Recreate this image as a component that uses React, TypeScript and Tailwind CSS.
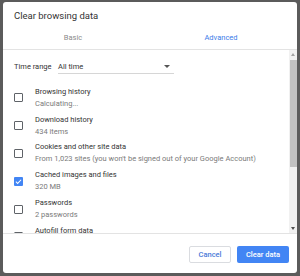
import React from "react";

const items = [
  { title: "Browsing history", sub: "Calculating...", checked: false },
  { title: "Download history", sub: "434 items", checked: false },
  { title: "Cookies and other site data", sub: "From 1,023 sites (you won't be signed out of your Google Account)", checked: false },
  { title: "Cached images and files", sub: "320 MB", checked: true },
  { title: "Passwords", sub: "2 passwords", checked: false },
  { title: "Autofill form data", sub: "", checked: false },
];

const Checkbox = ({ checked }: { checked: boolean }) =>
  checked ? (
    <div className="w-[9px] h-[9px] rounded-[1px] bg-[#4285f4] flex items-center justify-center shrink-0">
      <svg width="7" height="7" viewBox="0 0 24 24">
        <path d="M3 12.5l6 6L21 6" fill="none" stroke="white" strokeWidth="3.5" />
      </svg>
    </div>
  ) : (
    <div className="w-[9px] h-[9px] rounded-[1px] border-[1.5px] border-[#5f6368] shrink-0" />
  );

export default function App() {
  return (
    <div className="w-[300px] h-[276px] bg-[#5b5b5b] pt-[2px] pl-[3px] overflow-hidden" style={{ fontFamily: "Roboto, 'Liberation Sans', sans-serif" }}>
      <div className="w-[294px] h-[271px] bg-white rounded-[3px] flex flex-col overflow-hidden">
        <div className="pl-[11px] pt-[8px] h-[24px] text-[9.5px] leading-[12px] text-[#333]">Clear browsing data</div>
        <div className="flex -ml-[4px] h-[24px] border-b border-[#e3e3e3] text-[7.5px]">
          <div className="w-[148px] text-center leading-[24px] text-[#8a8a8a]">Basic</div>
          <div className="w-[148px] text-center leading-[24px] text-[#3b7de9]">Advanced</div>
        </div>
        <div className="flex h-[184px] border-b border-[#e3e3e3]">
          <div className="flex-1 overflow-hidden">
            <div className="flex items-center h-[34px] pl-[11px] text-[7.5px] text-[#333]">
              <span className="w-[44px]">Time range</span>
              <div className="relative w-[116px] h-[14px] border-b border-[#d6d6d6] flex items-center">
                <span>All time</span>
                <svg className="absolute right-[4px] top-[5px]" width="6" height="3" viewBox="0 0 6 3">
                  <path d="M0 0h6L3 3z" fill="#555" />
                </svg>
              </div>
            </div>
            {items.map((it) => (
              <div key={it.title} className="flex items-center h-[27.8px] pl-[11px]">
                <Checkbox checked={it.checked} />
                <div className="ml-[12px] text-[7.5px] leading-[12px]">
                  <div className="text-[#333]">{it.title}</div>
                  <div className="text-[#7a7a7a] h-[12px]">{it.sub}</div>
                </div>
              </div>
            ))}
          </div>
          <div className="w-[8px] bg-[#f1f1f1] flex flex-col items-center">
            <svg className="mt-[3px]" width="4" height="3" viewBox="0 0 4 3">
              <path d="M0 3h4L2 0z" fill="#a3a3a3" />
            </svg>
            <div className="mt-[4px] w-[7px] h-[107px] bg-[#c1c1c1]" />
            <div className="flex-1" />
            <svg className="mb-[3px]" width="4" height="3" viewBox="0 0 4 3">
              <path d="M0 0h4L2 3z" fill="#505050" />
            </svg>
          </div>
        </div>
        <div className="flex justify-end items-center gap-[6px] pr-[8px] pt-[2px] flex-1">
          <div className="w-[42px] h-[17px] border border-[#dadce0] rounded-[2px] flex items-center justify-center text-[7.5px] font-medium text-[#4a7ad9]">Cancel</div>
          <div className="w-[52px] h-[17px] bg-[#4285f4] rounded-[2px] flex items-center justify-center text-[7.5px] font-medium text-white">Clear data</div>
        </div>
      </div>
    </div>
  );
}
